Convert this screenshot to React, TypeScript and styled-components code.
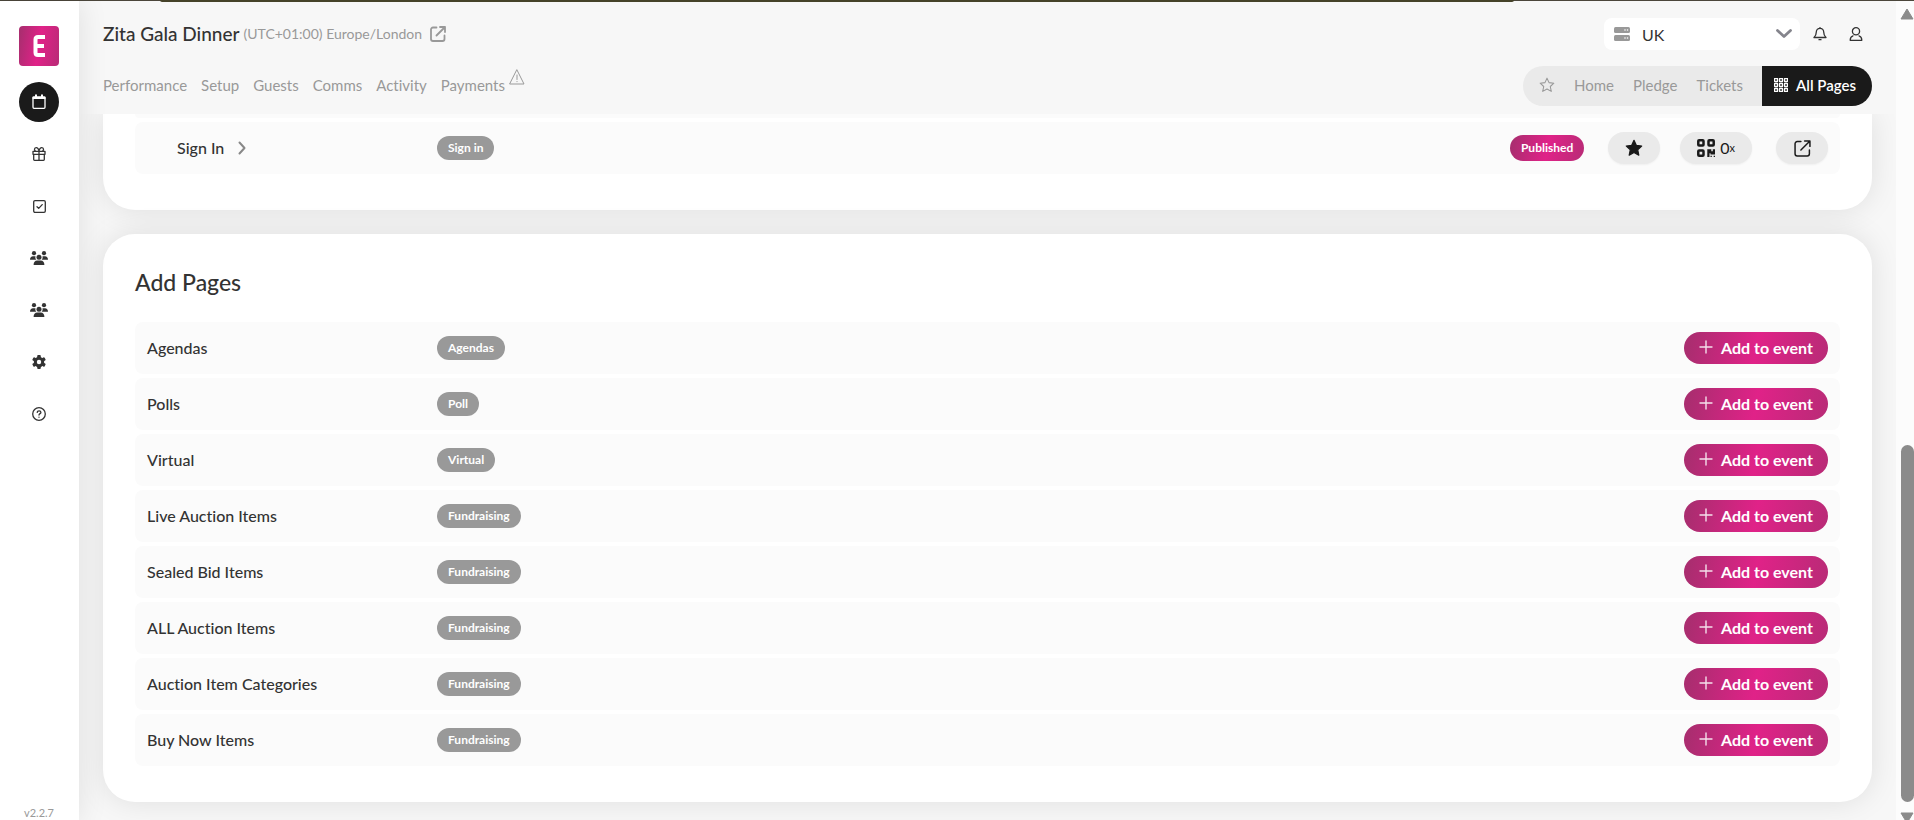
import React from "react";
import styled, { createGlobalStyle, css } from "styled-components";

const Global = createGlobalStyle`
  * { box-sizing: border-box; }
  html, body, #root { height: 100%; margin: 0; }
  body { overflow: hidden; background: #f7f7f7; }
  body, button, select { font-family: Lato, "Open Sans", sans-serif; font-variant-ligatures: none; color: #333; }
  button { border: 0; cursor: pointer; }
  a { text-decoration: none; }
  h1, h2, ul { margin: 0; padding: 0; }
  ul { list-style: none; }
  svg { display: block; flex: none; }
`;

const brand = css`
  background: linear-gradient(100deg, #ab2d70 5%, #e02288 50%, #b82b76 100%);
`;

const Shell = styled.div`
  position: relative;
  display: grid;
  grid-template-columns: 79px minmax(0, 1fr) 18px;
  grid-template-rows: minmax(0, 1fr);
  height: 100vh;
  border-top: 1px solid #4b463b;
`;

const WindowEdge = styled.div`
  position: absolute;
  top: -1px;
  left: 160px;
  right: 400px;
  height: 2px;
  background: #454229;
  border-radius: 0 0 6px 6px;
  z-index: 5;
`;

const Sidebar = styled.aside`
  display: flex;
  flex-direction: column;
  align-items: center;
  padding-top: 25px;
  padding-right: 1px;
  background: #fff;
  box-shadow: 0 0 30px rgba(0, 0, 0, 0.1);
  z-index: 3;
`;

const Logo = styled.a`
  display: block;
  width: 40px;
  height: 40px;
  border-radius: 4px;
  margin-bottom: 16px;
  ${brand}
`;

const SideNav = styled.nav`
  display: flex;
  flex-direction: column;
  gap: 12px;
`;

const SideLink = styled.a<{ $active?: boolean }>`
  display: grid;
  place-items: center;
  width: 40px;
  height: 40px;
  border-radius: 50%;
  color: ${(p) => (p.$active ? "#fff" : "#333")};
  background: ${(p) => (p.$active ? "#1a1a1a" : "transparent")};
`;

const Version = styled.small`
  margin-top: auto;
  font-size: 11px;
  line-height: 14px;
  color: #999;
`;

const Main = styled.main`
  display: flex;
  flex-direction: column;
  min-width: 0;
`;

const Header = styled.header`
  padding: 17px 24px 8px;
  background: #f7f7f7;
  z-index: 2;
`;

const Bar = styled.div`
  display: flex;
  align-items: center;
  justify-content: space-between;
`;

const TitleBar = styled(Bar)`
  margin-bottom: 16px;
`;

const TitleGroup = styled.div`
  display: flex;
  align-items: center;
  gap: 4px;
`;

const EventTitle = styled.h1`
  font-size: 19px;
  line-height: 24px;
  font-weight: 500;
`;

const Zone = styled.span`
  font-size: 14px;
  line-height: 24px;
  color: #999;
`;

const IconLink = styled.a`
  display: block;
  margin-left: 4px;
  color: #999;
`;

const Region = styled.label`
  display: flex;
  align-items: center;
  gap: 12px;
  width: 196px;
  height: 32px;
  margin-right: 2px;
  padding: 0 8px 0 10px;
  border-radius: 8px;
  background: #fff;
  color: #999;
`;

const RegionSelect = styled.select`
  appearance: none;
  flex: 1;
  min-width: 0;
  border: 0;
  padding: 0;
  background: transparent;
  font-size: 16px;
`;

const IconButton = styled.button`
  display: grid;
  place-items: center;
  width: 36px;
  height: 32px;
  padding: 0;
  background: transparent;
`;

const HeaderTools = styled.div`
  display: flex;
  align-items: center;
  margin-right: -2px;
`;

const Tabs = styled.nav`
  display: flex;
  gap: 14px;
  padding-bottom: 2px;
`;

const Tab = styled.a`
  display: flex;
  gap: 4px;
  font-size: 15px;
  line-height: 24px;
  color: #999;
  svg { margin-top: -4px; }
`;

const PageNav = styled.nav`
  display: flex;
  height: 40px;
  border-radius: 20px;
  overflow: hidden;
  background: #eaeaea;
`;

const PageLinks = styled.div`
  display: flex;
  align-items: center;
  gap: 19px;
  padding: 0 19px 2px 16px;
  color: #999;
  font-size: 15px;
`;

const PageLink = styled.a`
  color: #999;
`;

const AllPages = styled.a`
  display: flex;
  align-items: center;
  gap: 8px;
  padding: 0 16px 2px 12px;
  background: #1a1a1a;
  color: #fff;
  font-size: 15px;
  font-weight: 600;
`;

const Content = styled.div`
  flex: 1;
  min-height: 0;
  overflow: hidden;
  display: flex;
  flex-direction: column;
  gap: 24px;
  padding: 0 24px;
`;

const Card = styled.section<{ $continued?: boolean }>`
  padding: ${(p) => (p.$continued ? "0 32px 36px" : "32px 32px 36px")};
  border-radius: ${(p) => (p.$continued ? "0 0 32px 32px" : "32px")};
  background: #fff;
  box-shadow: 0 0 30px rgba(0, 0, 0, 0.1);
`;

const CardTitle = styled.h2`
  margin-bottom: 24px;
  font-size: 23px;
  line-height: 32px;
  font-weight: 500;
`;

const Rows = styled.ul`
  display: grid;
  gap: 4px;
`;

const Row = styled.li`
  display: grid;
  grid-template-columns: 290px minmax(0, 1fr) auto;
  align-items: center;
  height: 52px;
  padding: 0 12px;
  border-radius: 8px;
  background: #fbfbfb;
`;

const RowTail = styled.div`
  height: 4px;
  margin-bottom: 4px;
  border-radius: 0 0 8px 8px;
  background: #fbfbfb;
`;

const RowName = styled.span<{ $nested?: boolean }>`
  display: flex;
  align-items: center;
  gap: 14px;
  padding-left: ${(p) => (p.$nested ? 30 : 0)}px;
  font-size: 16px;
  line-height: 24px;
  font-weight: 500;
`;

const Tag = styled.span`
  justify-self: start;
  padding: 0 11px;
  border-radius: 12px;
  background: #999;
  color: #fff;
  font-size: 12px;
  line-height: 24px;
  font-weight: 700;
`;

const Published = styled.span`
  padding: 0 11px;
  margin-right: 24px;
  border-radius: 13px;
  color: #fff;
  font-size: 12px;
  line-height: 26px;
  font-weight: 700;
  ${brand}
`;

const PillButton = styled.button`
  display: flex;
  align-items: center;
  justify-content: center;
  gap: 5px;
  min-width: 52px;
  height: 32px;
  padding: 0 17px;
  border-radius: 16px;
  background: #eaeaea;
  color: #1a1a1a;
  font-size: 16px;
  box-shadow: 0 1px 2px rgba(0, 0, 0, 0.05);
`;

const Actions = styled.div`
  display: flex;
  align-items: center;
  ${PillButton} + ${PillButton} { margin-left: 20px; }
  ${PillButton}:last-child { margin-left: 24px; }
`;

const Count = styled.span`
  display: flex;
  align-items: center;
  line-height: 24px;
`;

const Times = styled.small`
  font-size: 11px;
`;

const AddButton = styled.button`
  display: flex;
  align-items: center;
  justify-content: center;
  gap: 8px;
  width: 144px;
  height: 32px;
  padding: 0 0 2px;
  border-radius: 16px;
  color: #fff;
  font-size: 16px;
  font-weight: 700;
  ${brand}
`;

const ScrollTrack = styled.div`
  display: flex;
  flex-direction: column;
  align-items: flex-end;
  padding-top: 7px;
  background: #fcfcfc;
  overflow: hidden;
  svg:last-child { margin-bottom: -4px; }
`;

const ScrollThumb = styled.div`
  width: 13px;
  height: 44%;
  margin-top: auto;
  margin-bottom: 10px;
  border-radius: 7px;
  background: #8b8b8b;
`;

const line = { fill: "none", stroke: "currentColor", strokeLinecap: "round", strokeLinejoin: "round" } as const;

const External = ({ size = 16, w = 1.5 }: { size?: number; w?: number }) => (
  <svg width={size} height={size} viewBox="0 0 16 16" {...line} strokeWidth={w}>
    <path d="M6.500 1.500H3A2 2 0 0 0 1 3.500V13a2 2 0 0 0 2 2h9.500a2 2 0 0 0 2-2V9.500M10 1h5v5M15 1 6.500 9.500" />
  </svg>
);
const Calendar = () => (
  <svg width="14" height="16" viewBox="0 0 14 16" {...line} strokeWidth="1.300">
    <path d="M1.700 3h10.600q.7 0 .7.700v9.600q0 1-1 1H2q-1 0-1-1V3.700q0-.7.700-.7Z" />
    <path d="M1.300 4h11.400M4 1.300v2M10 1.300v2" strokeWidth="2" />
  </svg>
);
const Gift = () => (
  <svg width="14" height="14" viewBox="0 0 14 14" {...line} strokeWidth="1.300">
    <path d="M1 4.300h12v3H1ZM1.700 7.300v5.200q0 .8.800.8h9q.8 0 .8-.8V7.300M7 4.300v9M7 4C6.500 1 5 .5 4 .7 2 1 2.200 3.500 3.500 4M7 4C7.500 1 9 .5 10 .7c2 .3 1.800 2.800.5 3.300" />
  </svg>
);
const Check = () => (
  <svg width="13" height="13" viewBox="0 0 13 13" {...line} strokeWidth="1.300">
    <rect x=".7" y=".7" width="11.600" height="11.600" rx="1.300" />
    <path d="m4 6.700 1.700 1.700L9.200 4.600" />
  </svg>
);
const Users = () => (
  <svg width="18" height="14" viewBox="0 0 18 14" fill="currentColor">
    <circle cx="4" cy="2.200" r="2.100" /><circle cx="14" cy="2.200" r="2.100" /><circle cx="9" cy="6.200" r="2.500" />
    <path d="M0 8.800C0 6.500 1.200 5.200 3 5.200h2.500c-.4 1.600 0 2.800.9 3.600ZM18 8.800c0-2.300-1.200-3.600-3-3.600h-2.500c.4 1.600 0 2.800-.9 3.600ZM3.600 14c0-2.800 1.400-4.400 3.600-4.400h3.600c2.200 0 3.600 1.600 3.600 4.400Z" />
  </svg>
);
const Gear = () => (
  <svg width="14" height="14" viewBox="0 0 14 14">
    <g fill="currentColor">
      <circle cx="7" cy="7" r="5.200" />
      {[0, 60, 120].map((a) => (
        <rect key={a} x="5.200" y="0" width="3.600" height="14" rx="1" transform={`rotate(${a} 7 7)`} />
      ))}
    </g>
    <circle cx="7" cy="7" r="2.200" fill="#fff" />
  </svg>
);
const Help = () => (
  <svg width="14" height="14" viewBox="0 0 14 14" {...line} strokeWidth="1.300">
    <circle cx="7" cy="7" r="6.300" />
    <path d="M5.200 5.400c.1-2 3.700-2 3.700 0C8.900 6.700 7 6.600 7 8M7 10.100v.1" />
  </svg>
);
const Warning = () => (
  <svg width="16" height="16" viewBox="0 0 16 16" {...line}>
    <path d="M8 1 15 15H1ZM8 6v4.500M8 12.500v.2" />
  </svg>
);
const Server = () => (
  <svg width="16" height="14" viewBox="0 0 16 14" fill="currentColor">
    <rect width="16" height="6" rx="1.500" /><rect y="8" width="16" height="6" rx="1.500" />
    <g fill="#fff"><circle cx="11" cy="3" r=".8" /><circle cx="13.500" cy="3" r=".8" /><circle cx="11" cy="11" r=".8" /><circle cx="13.500" cy="11" r=".8" /></g>
  </svg>
);
const Down = () => (
  <svg width="16" height="10" viewBox="0 0 16 10" {...line} stroke="#84848c" strokeWidth="2.800">
    <path d="m1.500 1.500 6.500 6 6.500-6" />
  </svg>
);
const Bell = () => (
  <svg width="14" height="14" viewBox="0 0 14 14" {...line} strokeWidth="1.300">
    <path d="M7 1.300C4.700 1.300 3.300 2.900 3.300 5c0 3-1 4.300-2.300 5.500h12C11.700 9.300 10.700 8 10.700 5c0-2.100-1.400-3.700-3.700-3.700ZM7 .5v.8M6 12.700h2" />
  </svg>
);
const User = () => (
  <svg width="14" height="14" viewBox="0 0 14 14" {...line} strokeWidth="1.300">
    <circle cx="7" cy="4.300" r="3.600" /><path d="M4 8.800c-1.700.5-2.800 1.900-2.800 4.500h11.600c0-2.600-1.100-4-2.800-4.500" />
  </svg>
);
const Star = ({ filled }: { filled?: boolean }) => (
  <svg width={filled ? 18 : 16} height={filled ? 18 : 16} viewBox="0 0 18 18" {...line} fill={filled ? "currentColor" : "none"} strokeWidth="1.200">
    <path d="m9 1.300 2.300 5 5.400.7-4 3.700 1.100 5.500L9 13.500l-4.800 2.700 1.100-5.500-4-3.700 5.400-.7Z" />
  </svg>
);
const Apps = () => (
  <svg width="14" height="14" viewBox="0 0 14 14" fill="none" stroke="currentColor" strokeWidth="1.300">
    {[0, 1, 2].map((r) => [0, 1, 2].map((c) => <rect key={`${r}${c}`} x={0.5 + c * 5} y={0.5 + r * 5} width="3" height="3" rx=".3" />))}
  </svg>
);
const Qr = () => (
  <svg width="18" height="18" viewBox="0 0 18 18">
    <g fill="none" stroke="currentColor" strokeWidth="2.500">
      <rect x="1.300" y="1.300" width="5.200" height="5.200" rx=".8" /><rect x="11.500" y="1.300" width="5.200" height="5.200" rx=".8" /><rect x="1.300" y="11.500" width="5.200" height="5.200" rx=".8" />
    </g>
    <path fill="currentColor" d="M10.300 10.300h4v2h1.500v-2H18v5.200h-4.500v-1.200h-1V18h-2.200ZM13.500 16.700h1.300V18h-1.300ZM16.700 16.700H18V18h-1.300Z" />
  </svg>
);
const Plus = () => (
  <svg width="14" height="14" viewBox="0 0 14 14" {...line} strokeWidth="1.400" opacity=".85"><path d="M7 1v12M1 7h12" /></svg>
);
const Next = () => (
  <svg width="8" height="14" viewBox="0 0 8 14" {...line} stroke="#888" strokeWidth="2"><path d="m1.500 1.500 5 5.500-5 5.500" /></svg>
);
const Arrow = ({ down }: { down?: boolean }) => (
  <svg width="14" height="12" viewBox="0 0 14 12" fill="#8b8b8b" stroke="#8b8b8b" strokeLinejoin="round">
    <path d={down ? "M1 1h12L7 11Z" : "M7 1l6 10H1Z"} />
  </svg>
);

const sections = [
  { name: "Events", icon: <Calendar /> },
  { name: "Gifts", icon: <Gift /> },
  { name: "Tasks", icon: <Check /> },
  { name: "Guests", icon: <Users /> },
  { name: "Teams", icon: <Users /> },
  { name: "Settings", icon: <Gear /> },
  { name: "Help", icon: <Help /> },
];

const tabs = ["Performance", "Setup", "Guests", "Comms", "Activity", "Payments"];

const pages = [
  ["Agendas", "Agendas"],
  ["Polls", "Poll"],
  ["Virtual", "Virtual"],
  ["Live Auction Items", "Fundraising"],
  ["Sealed Bid Items", "Fundraising"],
  ["ALL Auction Items", "Fundraising"],
  ["Auction Item Categories", "Fundraising"],
  ["Buy Now Items", "Fundraising"],
];

export default function App() {
  return (
    <Shell>
      <Global />
      <WindowEdge />
      <Sidebar>
        <Logo href="#" aria-label="Dashboard">
          <svg width="40" height="40" viewBox="0 0 40 40" fill="none" stroke="#fff" strokeWidth="4">
            <path d="M26 11h-7q-2.500 0-2.500 2.500v13q0 2.500 2.500 2.500h7M17 20h8" />
          </svg>
        </Logo>
        <SideNav>
          {sections.map((s, i) => (
            <SideLink key={s.name} href="#" aria-label={s.name} $active={i === 0}>{s.icon}</SideLink>
          ))}
        </SideNav>
        <Version>v2.2.7</Version>
      </Sidebar>
      <Main>
        <Header>
          <TitleBar>
            <TitleGroup>
              <EventTitle>Zita Gala Dinner</EventTitle>
              <Zone>(UTC+01:00) Europe/London</Zone>
              <IconLink href="#" aria-label="Open event"><External w={1.8} /></IconLink>
            </TitleGroup>
            <HeaderTools>
              <Region>
                <Server />
                <RegionSelect aria-label="Region"><option>UK</option></RegionSelect>
                <Down />
              </Region>
              <IconButton aria-label="Notifications"><Bell /></IconButton>
              <IconButton aria-label="Account"><User /></IconButton>
            </HeaderTools>
          </TitleBar>
          <Bar>
            <Tabs>
              {tabs.map((t) => (
                <Tab key={t} href="#">{t}{t === "Payments" && <Warning />}</Tab>
              ))}
            </Tabs>
            <PageNav>
              <PageLinks>
                <Star />
                <PageLink href="#">Home</PageLink>
                <PageLink href="#">Pledge</PageLink>
                <PageLink href="#">Tickets</PageLink>
              </PageLinks>
              <AllPages href="#"><Apps />All Pages</AllPages>
            </PageNav>
          </Bar>
        </Header>
        <Content>
          <Card $continued>
            <RowTail />
            <Rows>
              <Row>
                <RowName $nested>Sign In <Next /></RowName>
                <Tag>Sign in</Tag>
                <Actions>
                  <Published>Published</Published>
                  <PillButton aria-label="Favourite"><Star filled /></PillButton>
                  <PillButton aria-label="QR code scans"><Qr /><Count>0<Times>x</Times></Count></PillButton>
                  <PillButton aria-label="Open page"><External size={17} w={1.400} /></PillButton>
                </Actions>
              </Row>
            </Rows>
          </Card>
          <Card>
            <CardTitle>Add Pages</CardTitle>
            <Rows>
              {pages.map(([name, tag]) => (
                <Row key={name}>
                  <RowName>{name}</RowName>
                  <Tag>{tag}</Tag>
                  <AddButton><Plus />Add to event</AddButton>
                </Row>
              ))}
            </Rows>
          </Card>
        </Content>
      </Main>
      <ScrollTrack aria-hidden="true">
        <Arrow />
        <ScrollThumb />
        <Arrow down />
      </ScrollTrack>
    </Shell>
  );
}
